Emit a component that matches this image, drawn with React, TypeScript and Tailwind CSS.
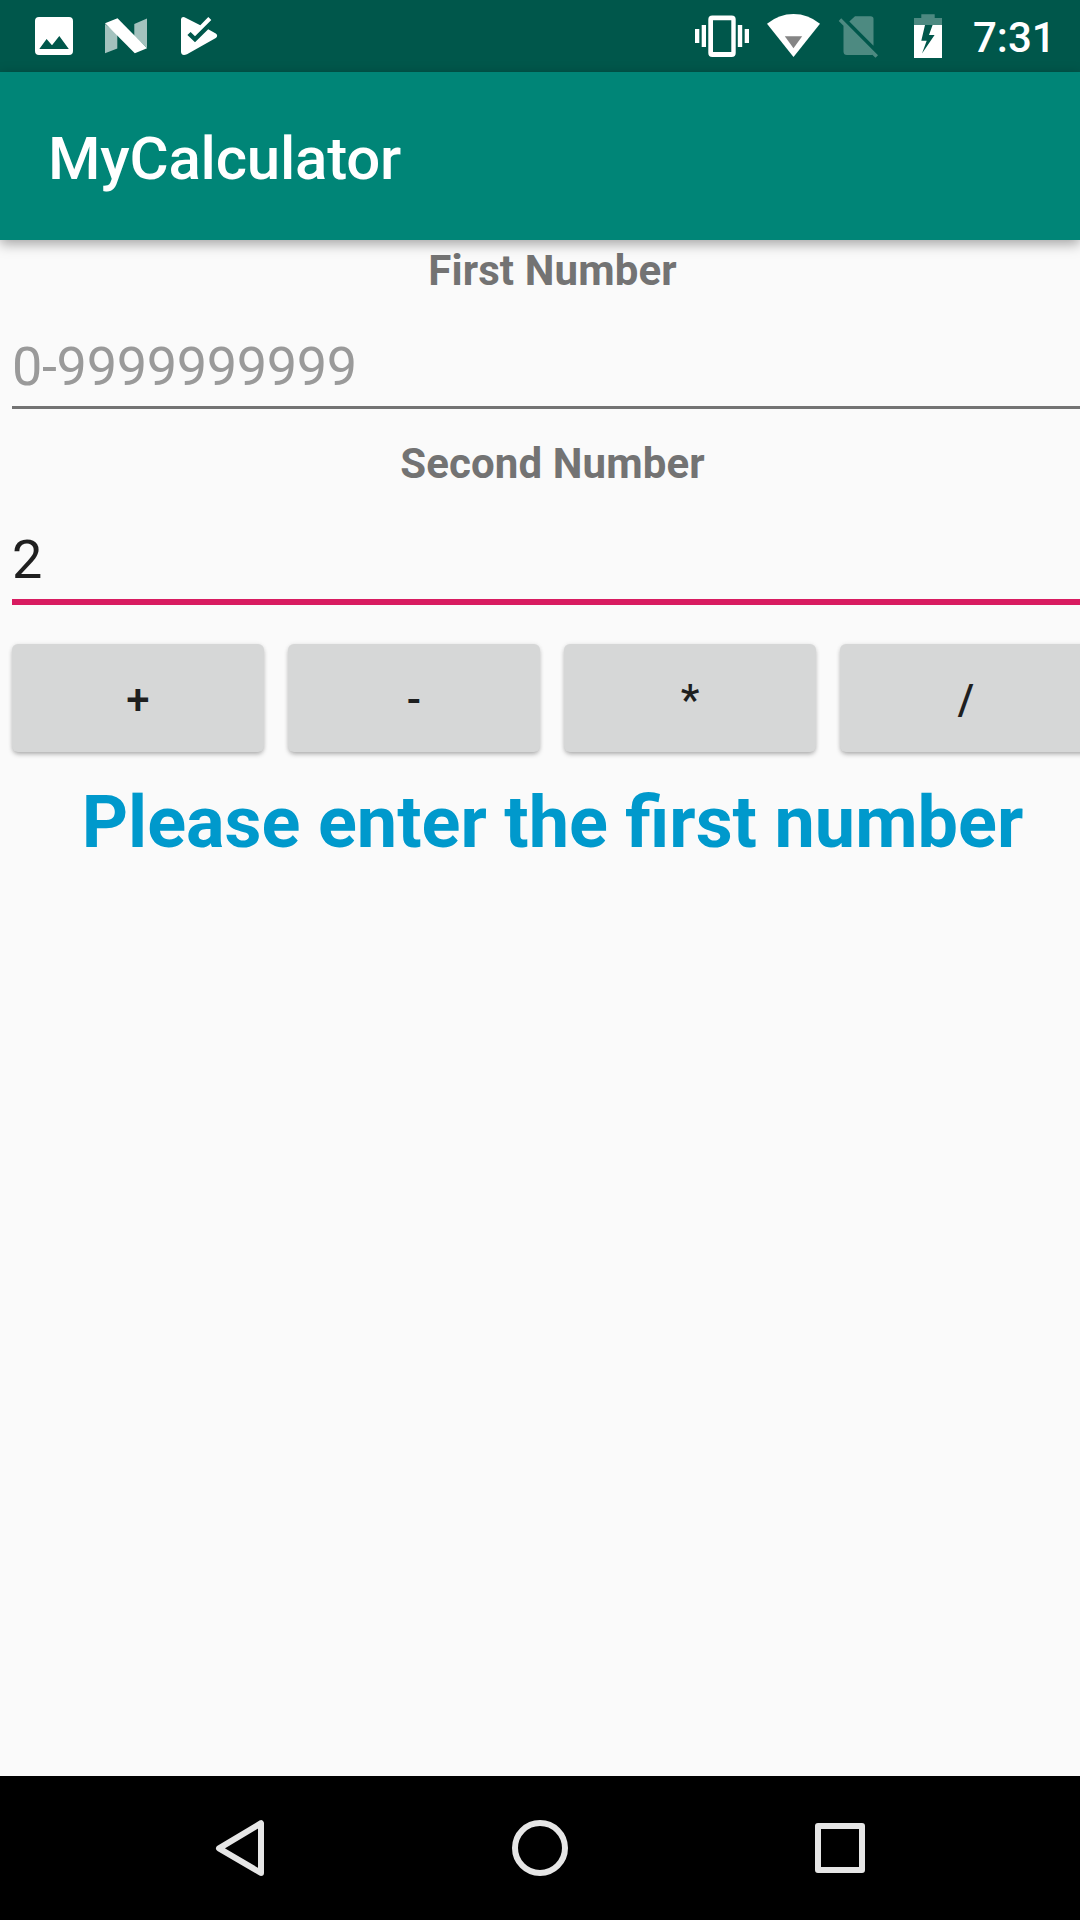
import React from "react";

function StatusBar() {
  return (
    <header className="flex h-[72px] justify-between bg-[#00574b] text-white">
      <div className="flex">
        <svg width="90" height="72" viewBox="0 0 90 72" fill="currentColor">
          <path
            fillRule="evenodd"
            d="M39 17H69Q73 17 73 21V51Q73 55 69 55H39Q35 55 35 51V21Q35 17 39 17ZM39.3 49H68.8L59.3 36L52 45.3L46.6 39Z"
          />
        </svg>
        <svg width="72" height="72" viewBox="90 0 72 72" fill="currentColor">
          <path opacity=".64" d="M105 24L117.3 34V48.5L105 53.3ZM134.3 24L147 18.5V48L134.3 36Z" />
          <path d="M105 23.2L117.5 18.2L147 48.2L134.8 53.3Z" />
        </svg>
        <svg width="72" height="72" viewBox="162 0 72 72" fill="currentColor">
          <path d="M181 19.5Q181 16.2 184.5 17.2L200.3 25.2L208.3 17L211.3 20L195 36.3L190.6 32L187.4 35L195 42.3L208.2 29.2L215.8 33.4Q218.5 35.5 215.8 38L187 54.3Q181.5 56.3 181 52Z" />
        </svg>
      </div>
      <div className="flex">
        <svg width="72" height="72" viewBox="686 0 72 72" fill="currentColor">
          <path
            fillRule="evenodd"
            d="M712.3 15.5H731.7Q735.7 15.5 735.7 19.5V53Q735.7 57 731.7 57H712.3Q708.3 57 708.3 53V19.5Q708.3 15.5 712.3 15.5ZM713 20.2V52H731.3V20.2Z"
          />
          <path d="M701.7 25H706V47H701.7ZM695 29H699.3V43H695ZM737.8 25H742.2V47H737.8ZM744.7 29H749V43H744.7Z" />
        </svg>
        <svg width="72" height="72" viewBox="758 0 72 72" fill="currentColor">
          <path d="M767 23.7Q779 14 793.5 14T820 23.7L793.5 57Z" />
          <path fill="#858585" d="M784.8 36.2H802.2L793.5 48.3Z" />
        </svg>
        <svg width="60" height="72" viewBox="830 0 60 72" fill="currentColor" opacity=".3">
          <path d="M849.3 21.5L855 16.2H870.5Q873.5 16.2 873.5 19V45.7Z" />
          <path d="M841.2 18.3L878 55.3L875.5 57.8L872.3 54.7Q871.5 55 870.5 55H847Q843.5 55 843.5 51.5V25.8L838.7 21Z" />
        </svg>
        <svg width="76" height="72" viewBox="890 0 76 72" fill="currentColor">
          <path opacity=".3" d="M921.3 14.3H934.7V18H942V25H914V18H921.3Z" />
          <path fillRule="evenodd" d="M914 25H942V58H914ZM925 25L921.3 40.8H926.7L922 53.5L934.6 35H929L932.6 25Z" />
        </svg>
        <time className="w-[114px] pl-[7px] text-[42px] leading-[76px] font-medium">7:31</time>
      </div>
    </header>
  );
}

function Label({ children }: { children: string }) {
  return (
    <label className="block h-[57px] pl-[1px] text-center text-[42px] leading-[61px] font-bold tracking-[0.13px] text-[#737373]">
      {children}
    </label>
  );
}

function OperatorButton({ symbol }: { symbol: string }) {
  return (
    <button className="h-[108px] w-[252px] shrink-0 rounded-[6px] bg-[#d6d7d7] pt-[4px] text-[42px] leading-none font-medium text-[#1e1f1f] shadow-[0_3px_5px_-1px_rgba(0,0,0,0.3),0_0_4px_rgba(0,0,0,0.08)]">
      {symbol}
    </button>
  );
}

function NavigationBar() {
  return (
    <nav className="flex h-[144px] items-center justify-center gap-[200px] bg-black">
      <svg width="100" height="144" viewBox="190 1776 100 144" fill="none" stroke="#e6e6e6" strokeWidth="6" strokeLinejoin="round">
        <path d="M219 1848.3L261 1823.2V1873Z" />
      </svg>
      <svg width="100" height="144" viewBox="490 1776 100 144" fill="none" stroke="#e6e6e6" strokeWidth="6">
        <circle cx="540" cy="1848" r="25" />
      </svg>
      <svg width="100" height="144" viewBox="790 1776 100 144" fill="none" stroke="#e6e6e6" strokeWidth="6" strokeLinejoin="round">
        <path d="M818 1826H862V1870H818Z" />
      </svg>
    </nav>
  );
}

export default function App() {
  return (
    <div className="flex h-[1920px] w-[1080px] flex-col overflow-hidden bg-[#fafafa] font-[Roboto,sans-serif]">
      <StatusBar />
      <div className="relative flex h-[168px] shrink-0 items-center bg-[#008577] pt-[6px] pl-[48px] shadow-[0_4px_12px_rgba(0,0,0,0.35)]">
        <h1 className="text-[60px] leading-[70px] font-medium tracking-[-0.2px] text-white">MyCalculator</h1>
      </div>
      <main className="w-[1104px] flex-1">
        <Label>First Number</Label>
        <div className="h-[136px] pl-[12px]">
          <div className="h-[112px] border-b-[3px] border-[#737373] pt-[38px] text-[54px] leading-[64px] tracking-[-0.33px] text-[#9a9a9a]">0-9999999999</div>
        </div>
        <Label>Second Number</Label>
        <div className="h-[136px] pl-[12px]">
          <div className="h-[115px] border-b-[6px] border-[#d81b60] pt-[38px] text-[54px] leading-[64px] text-[#1f1f1f]">2</div>
        </div>
        <div className="flex gap-[24px] px-[12px] pt-[18px]">
          <OperatorButton symbol="+" />
          <OperatorButton symbol="-" />
          <OperatorButton symbol="*" />
          <OperatorButton symbol="/" />
        </div>
        <output className="mt-[26px] block pl-[1px] text-center text-[72px] leading-[90px] font-bold [word-spacing:-0.4px] text-[#0099cc]">Please enter the first number</output>
      </main>
      <NavigationBar />
    </div>
  );
}
